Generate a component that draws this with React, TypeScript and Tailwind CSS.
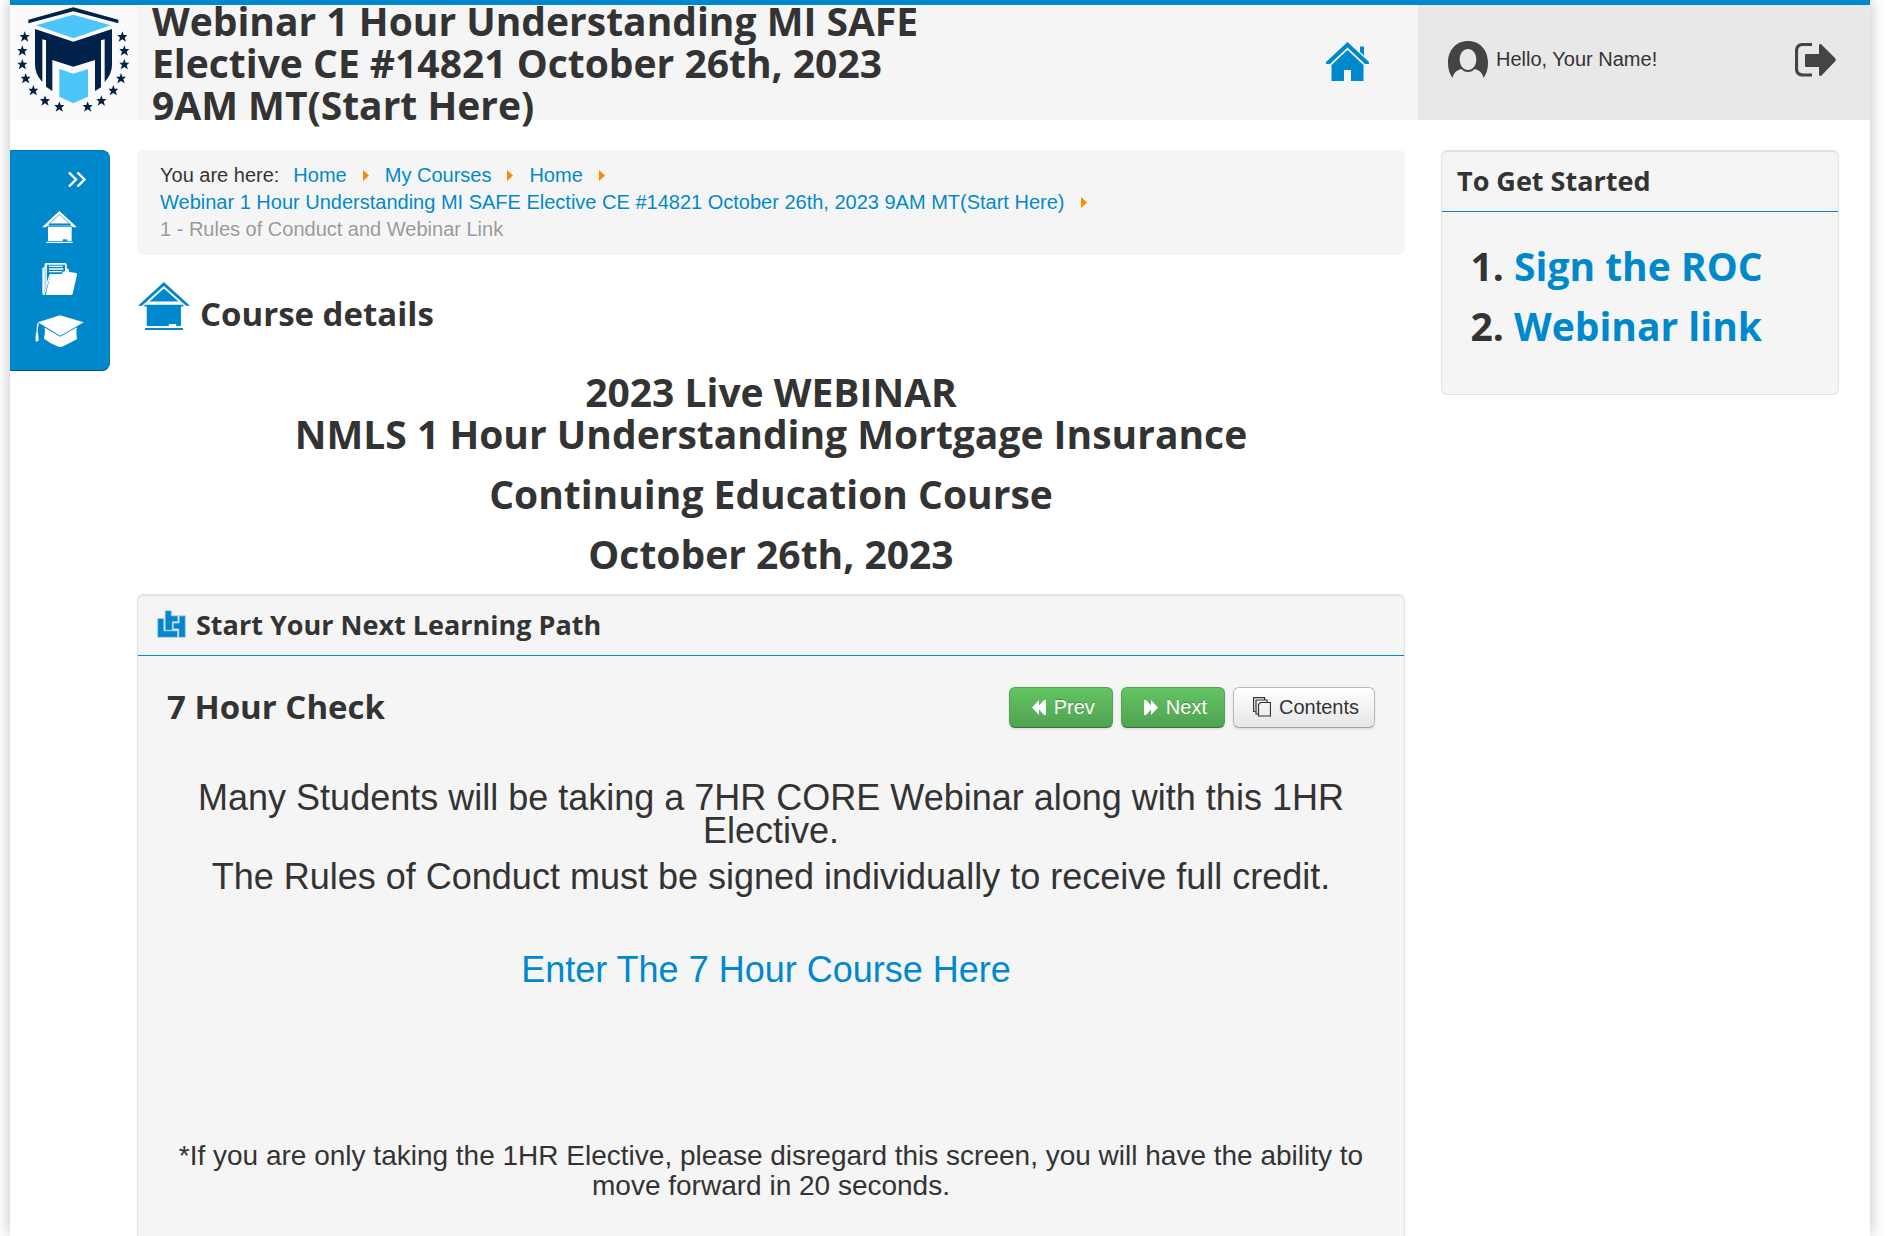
import React from 'react';

interface Crumb {
  label: string;
  href: string;
}

const crumbs: Crumb[] = [
  { label: 'Home', href: '#home' },
  { label: 'My Courses', href: '#courses' },
  { label: 'Home', href: '#course-home' },
];

const courseTitle = 'Webinar 1 Hour Understanding MI SAFE Elective CE #14821 October 26th, 2023 9AM MT(Start Here)';

const stars = [
  [74, 110], [67, 152], [67, 193], [77, 235], [100, 271], [135, 302], [178, 320],
  [263, 320], [304, 302], [340, 271], [363, 235], [373, 193], [373, 152], [367, 110],
];

function Logo() {
  return (
    <svg viewBox="30 15 381 345" className="h-[115px] w-[127px]" role="img" aria-label="School logo">
      <path d="M85 59 220 22l135 37v11L220 34 85 70z" fill="#00214a" />
      <path d="M108 76 220 44l112 32-112 39z" fill="#4cc5fa" />
      <path
        d="M105 87 220 125 336 87V195Q336 222 314 246V118L303 121V262L285 273V180L220 200 157 180V273L138 260V121L127 118V246Q105 222 105 195Z"
        fill="#00214a"
      />
      <path d="M178 207 220 221 264 207V290L220 310 178 290Z" fill="#4cc5fa" />
      {stars.map(([x, y], i) => (
        <path
          key={i}
          transform={`translate(${x} ${y})`}
          d="M0-16 4-5H15L7 3 11 15 0 8-11 15-7 3-15-5H-4Z"
          fill="#00214a"
        />
      ))}
    </svg>
  );
}

function HomeIcon() {
  return (
    <svg viewBox="0 0 43 39" className="h-[39px] w-[43px]" fill="#0088cc" aria-hidden="true">
      <path d="M0 20 21.5 0 43 20v2h-4L21.500 5.500 4 22H0z" />
      <path d="M5.500 23 21.500 8 37.500 23v16H25V28h-7v11H5.500z" />
      <path d="M34 4.500h4v9l-4-3.500z" />
    </svg>
  );
}

function UserIcon() {
  return (
    <svg viewBox="0 0 40 38" className="h-[38px] w-10" fill="#444" aria-hidden="true">
      <path
        fillRule="evenodd"
        d="M20 0C8 0 0 9 0 22c0 6 1.500 11 4.500 15 1-5 4-8 9-9 1.500 2 3.500 3 6.500 3s5-1 6.500-3c5 1 8 4 9 9 3-4 4.500-9 4.500-15C40 9 32 0 20 0Zm0 8c4.800 0 8.300 4.500 8.300 10.500S24.500 29 20 29s-8.300-4.500-8.300-10.500S15.200 8 20 8Z"
      />
    </svg>
  );
}

function LogoutIcon() {
  return (
    <svg viewBox="0 0 41 34" className="h-[34px] w-[41px]" aria-hidden="true">
      <path d="M17 1.500H8Q1.500 1.500 1.500 8v17.500Q1.500 32 8 32h9" fill="none" stroke="#444" strokeWidth="3.200" />
      <path d="M11 11h13V2q1-2 3 0l13 13q1.500 2 0 3.500L27 32q-2 2-3 0v-8H11q-1 0-1-1V12q0-1 1-1Z" fill="#444" />
    </svg>
  );
}

function SchoolIcon() {
  return (
    <svg viewBox="415 427 155 143" className="h-12 w-[52px]" fill="#0088cc" aria-hidden="true">
      <path d="M415 498 492 427 570 498H558L492 439 427 498Z" />
      <path d="M492 446 536 485H449Z" />
      <path d="M434 495H550V500H543V558H529V552H507V558H441V500H434Z" />
      <path d="M436 564H549V570H436Z" />
    </svg>
  );
}

function SideHouseIcon() {
  return (
    <svg viewBox="126 213 105 96" className="h-8 w-[35px]" aria-hidden="true">
      <path d="M126 262 178 213 231 262H220L214 258H143L137 262Z" fill="#fff" />
      <path d="M148 251 178 223 209 251Z" fill="none" stroke="#0088cc" strokeWidth="2" />
      <path d="M146 252H212V257H146Z" fill="#0088cc" />
      <path d="M144 260H215V303H144ZM139 305H218V309H139Z" fill="#fff" />
      <path d="M188 298H202V303H188Z" fill="#0088cc" />
    </svg>
  );
}

function FolderIcon() {
  return (
    <svg viewBox="126 369 105 96" className="h-8 w-[35px]" aria-hidden="true">
      <path d="M127 384 134 381V372L137 369H197L200 373V384L206 388 207 395 200 410H150L134 465H130L127 462Z" fill="#fff" />
      <path d="M133 385H140V440L133 458Z" fill="#b3dbf0" />
      <path d="M141 374H195V402H149L141 425Z" fill="#0088cc" />
      <path d="M147 379H188M147 387H190M147 395H186" stroke="#fff" strokeWidth="4" />
      <path d="M152 402H185L191 394 229 399 231 404 218 462 215 465H137Z" fill="#fff" />
    </svg>
  );
}

function CapIcon() {
  return (
    <svg viewBox="105 527 147 97" className="h-8 w-[49px]" fill="#fff" aria-hidden="true">
      <path d="M113 549 180 528 252 549 181 590Z" />
      <path d="M133 565 181 593 231 564Q228 584 232 600 210 612 190 622 181 626 172 622 148 612 131 598 136 582 133 565Z" />
      <path d="M112 550 116 554Q111 568 113 583 117 598 114 606L107 608Q104 590 109 576 109 560 112 550Z" />
    </svg>
  );
}

function PathIcon() {
  return (
    <svg viewBox="79 92 89 86" className="h-7 w-[29px]" fill="#0088cc" stroke="#c3cdea" strokeWidth="2" aria-hidden="true">
      <path d="M81 118H100V156H142V176H81Z" />
      <path d="M104 94H123V110H143V128H126V154H104Z" />
      <path d="M147 110H166V176H146V150H129V132H147Z" />
    </svg>
  );
}

function PagesIcon() {
  return (
    <svg viewBox="0 0 18 20" className="h-5 w-[18px]" fill="none" stroke="#333" strokeWidth="1.200" aria-hidden="true">
      <path d="M2.500 14.500H.6V.6h11V3" />
      <path d="M5 17H3V3h11v2.500" />
      <path d="M7.500 5.500h10v13.500H5.500V7.500z" />
    </svg>
  );
}

function Caret() {
  return (
    <svg viewBox="0 0 6 11" className="mx-4 inline-block h-[11px] w-[6px]" aria-hidden="true">
      <path d="M0 0 6 5.500 0 11Z" fill="#ff8800" />
    </svg>
  );
}

function Header() {
  return (
    <header className="flex h-[120px] border-t-[5px] border-[#0088cc]">
      <a href="#top" className="w-[127px] shrink-0 bg-[#fafafa]">
        <Logo />
      </a>
      <div className="flex flex-1 items-center justify-between bg-[#f5f5f5] pr-[49px] pl-[15px]">
        <h1 className="max-w-[800px] font-['Open_Sans',sans-serif] text-[39px] leading-[42px] font-bold">
          {courseTitle}
        </h1>
        <a href="#home" aria-label="Home" className="pb-0.5">
          <HomeIcon />
        </a>
      </div>
      <div className="flex w-[452px] shrink-0 items-center justify-between bg-[#e8e8e8] pr-[34px] pb-1.5 pl-[30px]">
        <div className="flex items-center gap-2">
          <UserIcon />
          <span>Hello, Your Name!</span>
        </div>
        <button type="button" aria-label="Log out">
          <LogoutIcon />
        </button>
      </div>
    </header>
  );
}

function Sidebar() {
  return (
    <nav className="flex h-[221px] w-[100px] shrink-0 flex-col rounded-r-lg border border-l-0 border-[#0077b3] border-b-[#005580] bg-[#0088cc] pt-[21px]">
      <button type="button" aria-label="Expand menu" className="mr-[23px] self-end">
        <svg viewBox="0 0 18 15" className="h-[15px] w-[18px]" fill="none" stroke="#fff" strokeWidth="2.400" aria-hidden="true">
          <path d="M1 .5 8 7.500 1 14.500M9.500 .5 16.500 7.500 9.500 14.500" />
        </svg>
      </button>
      <div className="mt-6 flex flex-col items-center gap-5">
        <a href="#home" aria-label="Home"><SideHouseIcon /></a>
        <a href="#files" aria-label="Files"><FolderIcon /></a>
        <a href="#courses" aria-label="Courses"><CapIcon /></a>
      </div>
    </nav>
  );
}

function Breadcrumbs() {
  return (
    <nav className="rounded-md bg-[#f5f5f5] px-[23px] py-3 [text-shadow:0_1px_0_#fff]">
      <div className="flex items-center">
        <span className="mr-3.5">You are here:</span>
        {crumbs.map((crumb, i) => (
          <React.Fragment key={i}>
            <a href={crumb.href} className="text-[#0088cc]">{crumb.label}</a>
            <Caret />
          </React.Fragment>
        ))}
      </div>
      <div className="flex items-center">
        <a href="#course" className="text-[#0088cc]">{courseTitle}</a>
        <Caret />
      </div>
      <div className="text-[#999]">1 - Rules of Conduct and Webinar Link</div>
    </nav>
  );
}

function LearningPath() {
  return (
    <section className="mt-[19px] flex-1 rounded-t-md border border-b-0 border-[#e3e3e3] bg-[#f5f5f5] shadow-[inset_0_1px_1px_rgba(0,0,0,0.08)]">
      <div className="flex h-[61px] items-center gap-2.5 border-b border-[#0088cc] px-[19px] pb-0.5">
        <PathIcon />
        <h3 className="font-['Open_Sans',sans-serif] text-[27px] font-bold">Start Your Next Learning Path</h3>
      </div>
      <div className="px-[29px] pt-[31px]">
        <div className="flex items-center justify-between">
          <h2 className="pb-0.5 font-['Open_Sans',sans-serif] text-[33px] leading-[33px] font-bold">7 Hour Check</h2>
          <div className="flex gap-2">
            <button type="button" className="flex h-[41px] items-center gap-2 rounded-md border border-[#51a351] border-b-[#387038] bg-linear-to-b from-[#62c462] to-[#51a351] pr-[17px] pb-px pl-[22px] text-white shadow-sm [text-shadow:0_-1px_0_rgba(0,0,0,0.25)]">
              <svg viewBox="0 0 14 15" className="h-[15px] w-[14px]" fill="#fff" aria-hidden="true">
                <path d="M0 7.500 7 0v5.500L12 0h2v15h-2L7 9.500V15z" />
              </svg>
              Prev
            </button>
            <button type="button" className="flex h-[41px] items-center gap-2 rounded-md border border-[#51a351] border-b-[#387038] bg-linear-to-b from-[#62c462] to-[#51a351] pr-[17px] pb-px pl-[22px] text-white shadow-sm [text-shadow:0_-1px_0_rgba(0,0,0,0.25)]">
              <svg viewBox="0 0 14 15" className="h-[15px] w-[14px]" fill="#fff" aria-hidden="true">
                <path d="M14 7.500 7 0v5.500L2 0H0v15h2l5-5.500V15z" />
              </svg>
              Next
            </button>
            <button type="button" className="flex h-[41px] items-center gap-2 rounded-md border border-[#bbb] border-b-[#a2a2a2] bg-linear-to-b from-white to-[#e6e6e6] pr-[15px] pb-px pl-[19px] shadow-sm">
              <PagesIcon />
              Contents
            </button>
          </div>
        </div>
        <div className="mt-[53px] text-center text-[36px] leading-[33px]">
          <p>Many Students will be taking a 7HR CORE Webinar along with this 1HR Elective.</p>
          <p className="mt-[13px]">The Rules of Conduct must be signed individually to receive full credit.</p>
          <p className="mt-[60px]">
            <a href="#seven-hour" className="text-[#0088cc]">Enter The 7 Hour Course Here</a>&nbsp;
          </p>
        </div>
        <p className="mt-[155px] text-center text-[28px] leading-[30px]">
          *If you are only taking the 1HR Elective, please disregard this screen, you will have the ability to move forward in 20 seconds.
        </p>
      </div>
    </section>
  );
}

function GetStarted() {
  return (
    <aside className="w-[398px] shrink-0 self-start rounded-md border border-[#e3e3e3] bg-[#f5f5f5] shadow-[inset_0_1px_1px_rgba(0,0,0,0.08)]">
      <div className="flex h-[61px] items-center border-b border-[#0088cc] px-[15px] pb-0.5 font-['Open_Sans',sans-serif]">
        <h3 className="text-[27px] font-bold">To Get Started</h3>
      </div>
      <ol className="list-decimal space-y-[18px] pt-[33px] pb-[47px] pl-[72px] font-['Open_Sans',sans-serif] text-[39px] leading-[42px] font-bold">
        <li><a href="#roc" className="text-[#0088cc]">Sign the ROC</a></li>
        <li><a href="#webinar" className="text-[#0088cc]">Webinar link</a></li>
      </ol>
    </aside>
  );
}

export default function App() {
  return (
    <div className="min-h-screen bg-white pr-[17px] pl-2.5">
      <div className="flex min-h-screen flex-col bg-white font-['Liberation_Sans',Arial,sans-serif] text-[20px] leading-[27px] text-[#333] shadow-[0_0_15px_rgba(0,0,0,0.25)]">
        <Header />
        <div className="flex flex-1 pt-[30px] pr-[31px]">
          <Sidebar />
          <main className="mr-9 ml-[27px] flex flex-1 flex-col">
            <Breadcrumbs />
            <div className="mt-[27px] flex items-end gap-2.5 pl-px">
              <SchoolIcon />
              <h2 className="font-['Open_Sans',sans-serif] text-[33px] leading-[33px] font-bold">Course details</h2>
            </div>
            <div className="mt-[41px] space-y-[18px] text-center font-['Open_Sans',sans-serif] text-[39px] leading-[42px] font-bold">
              <p>2023 Live WEBINAR<br />NMLS 1 Hour Understanding Mortgage Insurance</p>
              <p>Continuing Education Course</p>
              <p>October 26th, 2023</p>
            </div>
            <LearningPath />
          </main>
          <GetStarted />
        </div>
      </div>
    </div>
  );
}
